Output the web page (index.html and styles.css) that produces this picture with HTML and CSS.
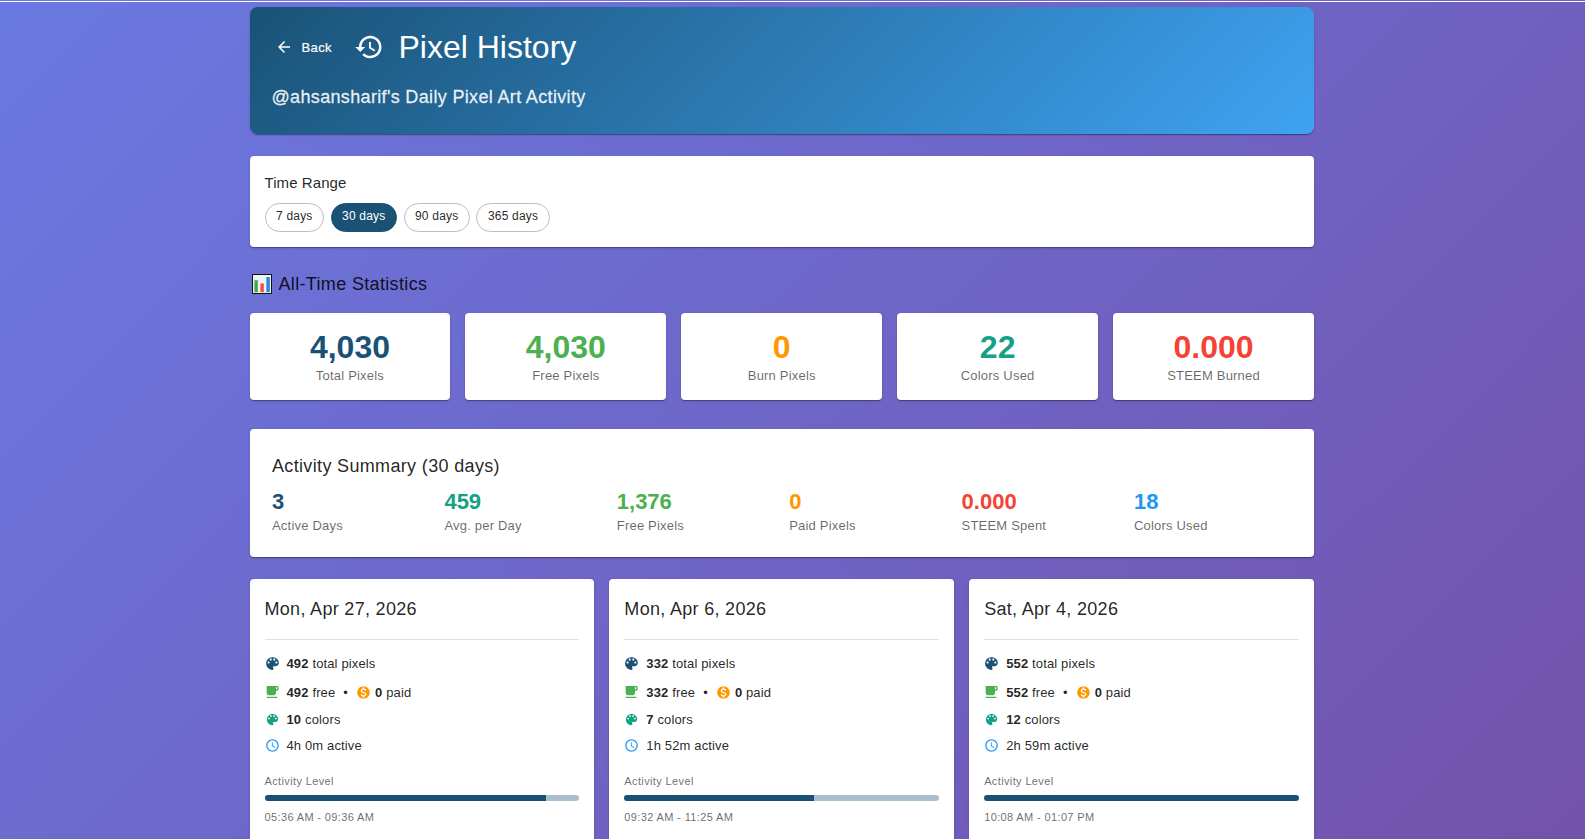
FILE: index.html
```html
<!DOCTYPE html>
<html lang="en">
<head>
<meta charset="utf-8">
<title>Pixel History</title>
<link rel="stylesheet" href="styles.css">
</head>
<body>
<div class="topline"></div>
<main class="container">
  <header class="hero">
    <div class="hero-top">
      <a class="back"><svg class="back-icon" viewBox="0 0 24 24"><path d="M20 11H7.83l5.59-5.59L12 4l-8 8 8 8 1.41-1.41L7.83 13H20v-2z"/></svg>Back</a>
      <svg class="hero-icon" viewBox="0 0 24 24"><path d="M13 3c-4.97 0-9 4.03-9 9H1l3.89 3.89.07.14L9 12H6c0-3.87 3.13-7 7-7s7 3.13 7 7-3.13 7-7 7c-1.93 0-3.68-.79-4.94-2.06l-1.42 1.42C8.27 19.99 10.51 21 13 21c4.97 0 9-4.03 9-9s-4.03-9-9-9zm-1 5v5l4.28 2.54.72-1.21-3.5-2.08V8H12z"/></svg>
      <h1>Pixel History</h1>
    </div>
    <p class="subtitle">@ahsansharif's Daily Pixel Art Activity</p>
  </header>

  <section class="card range">
    <div class="range-label">Time Range</div>
    <div class="chips">
      <span class="chip">7 days</span>
      <span class="chip active">30 days</span>
      <span class="chip">90 days</span>
      <span class="chip">365 days</span>
    </div>
  </section>

  <h2 class="section-title"><svg class="chart-emoji" viewBox="0 0 20 20"><rect x="0.5" y="0.5" width="19" height="19" fill="#edf2f7" stroke="#111"/><rect x="2.4" y="6.2" width="3.4" height="12" fill="#3fa648"/><rect x="8.4" y="9.4" width="3.4" height="8.8" fill="#e8553c"/><rect x="14.4" y="3" width="3.4" height="15.2" fill="#2f86d6"/></svg>All-Time Statistics</h2>

  <section class="stats">
    <div class="card stat"><div class="stat-value c-navy">4,030</div><div class="stat-label">Total Pixels</div></div>
    <div class="card stat"><div class="stat-value c-green">4,030</div><div class="stat-label">Free Pixels</div></div>
    <div class="card stat"><div class="stat-value c-orange">0</div><div class="stat-label">Burn Pixels</div></div>
    <div class="card stat"><div class="stat-value c-teal">22</div><div class="stat-label">Colors Used</div></div>
    <div class="card stat"><div class="stat-value c-red">0.000</div><div class="stat-label">STEEM Burned</div></div>
  </section>

  <section class="card summary">
    <h3>Activity Summary (30 days)</h3>
    <div class="summary-grid">
      <div><div class="sum-value c-navy">3</div><div class="sum-label">Active Days</div></div>
      <div><div class="sum-value c-teal">459</div><div class="sum-label">Avg. per Day</div></div>
      <div><div class="sum-value c-green">1,376</div><div class="sum-label">Free Pixels</div></div>
      <div><div class="sum-value c-orange">0</div><div class="sum-label">Paid Pixels</div></div>
      <div><div class="sum-value c-red">0.000</div><div class="sum-label">STEEM Spent</div></div>
      <div><div class="sum-value c-blue">18</div><div class="sum-label">Colors Used</div></div>
    </div>
  </section>

  <svg class="sprite" width="0" height="0">
    <symbol id="i-palette" viewBox="0 0 24 24"><path d="M12 3c-4.97 0-9 4.03-9 9s4.03 9 9 9c.83 0 1.5-.67 1.5-1.5 0-.39-.15-.74-.39-1.01-.23-.26-.38-.61-.38-.99 0-.83.67-1.5 1.5-1.5H16c2.76 0 5-2.24 5-5 0-4.42-4.03-8-9-8zm-5.5 9c-.83 0-1.5-.67-1.5-1.5S5.67 9 6.5 9 8 9.67 8 10.5 7.33 12 6.5 12zm3-4C8.67 8 8 7.33 8 6.5S8.67 5 9.5 5s1.5.67 1.5 1.5S10.33 8 9.5 8zm5 0c-.83 0-1.5-.67-1.5-1.5S13.67 5 14.5 5s1.5.67 1.5 1.5S15.33 8 14.5 8zm3 4c-.83 0-1.5-.67-1.5-1.5S16.67 9 17.5 9s1.5.67 1.5 1.5-.67 1.5-1.5 1.5z"/></symbol>
    <symbol id="i-cup" viewBox="0 0 24 24"><path d="M20 3H4v10c0 2.21 1.79 4 4 4h6c2.21 0 4-1.79 4-4v-3h2c1.11 0 2-.9 2-2V5c0-1.11-.89-2-2-2zm0 5h-2V5h2v3zM4 19h16v2H4z"/></symbol>
    <symbol id="i-coin" viewBox="0 0 24 24"><path d="M12 2C6.48 2 2 6.48 2 12s4.48 10 10 10 10-4.48 10-10S17.52 2 12 2zm1.41 16.09V20h-2.67v-1.93c-1.71-.36-3.16-1.46-3.27-3.4h1.96c.1 1.05.82 1.87 2.65 1.87 1.96 0 2.4-.98 2.4-1.59 0-.83-.44-1.61-2.67-2.14-2.48-.6-4.18-1.62-4.18-3.67 0-1.72 1.39-2.84 3.11-3.21V4h2.67v1.95c1.86.45 2.79 1.86 2.85 3.39H14.3c-.05-1.11-.64-1.87-2.22-1.87-1.5 0-2.4.68-2.4 1.64 0 .84.65 1.39 2.67 1.91s4.18 1.39 4.18 3.91c-.01 1.83-1.38 2.83-3.12 3.16z"/></symbol>
    <symbol id="i-clock" viewBox="0 0 24 24"><path d="M11.99 2C6.47 2 2 6.48 2 12s4.47 10 9.99 10C17.52 22 22 17.52 22 12S17.52 2 11.99 2zM12 20c-4.42 0-8-3.58-8-8s3.58-8 8-8 8 3.58 8 8-3.58 8-8 8zm.5-13H11v6l5.25 3.15.75-1.23-4.5-2.67z"/></symbol>
  </svg>

  <section class="days">
    <article class="card day">
      <h4>Mon, Apr 27, 2026</h4>
      <hr class="divider">
      <div class="row row-total"><svg class="ico c-navy"><use href="#i-palette"/></svg><span><b>492</b> total pixels</span></div>
      <div class="row row-free"><svg class="ico c-green"><use href="#i-cup"/></svg><span><b>492</b> free</span><span class="dot">•</span><svg class="ico-sm c-orange"><use href="#i-coin"/></svg><span><b>0</b> paid</span></div>
      <div class="row row-colors"><svg class="ico c-teal"><use href="#i-palette"/></svg><span><b>10</b> colors</span></div>
      <div class="row row-time"><svg class="ico c-blue"><use href="#i-clock"/></svg><span>4h 0m active</span></div>
      <div class="level-label">Activity Level</div>
      <div class="track"><div class="fill" style="width:89.3%"></div></div>
      <div class="time-range">05:36 AM - 09:36 AM</div>
    </article>
    <article class="card day">
      <h4>Mon, Apr 6, 2026</h4>
      <hr class="divider">
      <div class="row row-total"><svg class="ico c-navy"><use href="#i-palette"/></svg><span><b>332</b> total pixels</span></div>
      <div class="row row-free"><svg class="ico c-green"><use href="#i-cup"/></svg><span><b>332</b> free</span><span class="dot">•</span><svg class="ico-sm c-orange"><use href="#i-coin"/></svg><span><b>0</b> paid</span></div>
      <div class="row row-colors"><svg class="ico c-teal"><use href="#i-palette"/></svg><span><b>7</b> colors</span></div>
      <div class="row row-time"><svg class="ico c-blue"><use href="#i-clock"/></svg><span>1h 52m active</span></div>
      <div class="level-label">Activity Level</div>
      <div class="track"><div class="fill" style="width:60.3%"></div></div>
      <div class="time-range">09:32 AM - 11:25 AM</div>
    </article>
    <article class="card day">
      <h4>Sat, Apr 4, 2026</h4>
      <hr class="divider">
      <div class="row row-total"><svg class="ico c-navy"><use href="#i-palette"/></svg><span><b>552</b> total pixels</span></div>
      <div class="row row-free"><svg class="ico c-green"><use href="#i-cup"/></svg><span><b>552</b> free</span><span class="dot">•</span><svg class="ico-sm c-orange"><use href="#i-coin"/></svg><span><b>0</b> paid</span></div>
      <div class="row row-colors"><svg class="ico c-teal"><use href="#i-palette"/></svg><span><b>12</b> colors</span></div>
      <div class="row row-time"><svg class="ico c-blue"><use href="#i-clock"/></svg><span>2h 59m active</span></div>
      <div class="level-label">Activity Level</div>
      <div class="track"><div class="fill" style="width:100%"></div></div>
      <div class="time-range">10:08 AM - 01:07 PM</div>
    </article>
  </section>
</main>
</body>
</html>
```

FILE: styles.css
```css
* { box-sizing: border-box; }
html, body { margin: 0; height: 839px; overflow: hidden; }
body {
  background: linear-gradient(135deg, #6a79e2 0%, #7352ab 100%);
  font-family: "Liberation Sans", Arial, sans-serif;
  color: rgba(0,0,0,.87);
}
.topline { height: 2px; border-bottom: 1px solid #fff; }
.container { width: 1064.5px; margin: 5px 0 0 249.5px; }
h1,h2,h3,h4,p { margin: 0; font-weight: 400; }
.card {
  background: #fff;
  border-radius: 4px;
  box-shadow: 0 2px 1px -1px rgba(0,0,0,.2), 0 1px 1px 0 rgba(0,0,0,.14), 0 1px 3px 0 rgba(0,0,0,.12);
}
.hero {
  height: 127px;
  border-radius: 8px;
  padding: 16px 22px;
  background: linear-gradient(135deg, #1a5276 0%, #3fa3f2 100%);
  box-shadow: 0 2px 1px -1px rgba(0,0,0,.2), 0 1px 1px 0 rgba(0,0,0,.14), 0 1px 3px 0 rgba(0,0,0,.12);
  color: #fff;
}
.hero-top { display: flex; align-items: center; height: 48px; }
.back { display: flex; align-items: center; font-size: 13px; letter-spacing: .37px; width: 82px; padding-left: 3px; -webkit-text-stroke: .2px #fff; }
.back-icon { width: 18px; height: 18px; fill: #fff; margin-right: 9px; }
.hero-icon { width: 30px; height: 30px; fill: #fff; margin-right: 15px; }
h1 { font-size: 32px; line-height: 1.2; }
.subtitle { margin-top: 13px; font-size: 18px; color: rgba(255,255,255,.9); line-height: 1.5; letter-spacing: .34px; -webkit-text-stroke: .3px rgba(255,255,255,.8); }

.range { margin-top: 22px; height: 91px; padding: 16px 15px; }
.range-label { font-size: 15px; line-height: 22px; letter-spacing: .08px; }
.chips { display: flex; gap: 6.5px; margin-top: 9px; }
.chip {
  height: 29px; padding: 0 10.5px 3px; display: flex; align-items: center;
  border: 1px solid #bdbdbd; border-radius: 15px;
  font-size: 12px; letter-spacing: .2px;
}
.chip.active { background: #1a5276; border-color: #1a5276; color: #fff; }

.section-title { display: flex; align-items: center; font-size: 18px; margin-top: 23px; line-height: 28px; letter-spacing: .34px; }
.chart-emoji { width: 20px; height: 20px; margin: 0 7px 0 2px; }

.stats { display: grid; grid-template-columns: repeat(5, 1fr); gap: 15px; margin-top: 15px; }
.stat { height: 87px; text-align: center; padding-top: 16px; }
.stat-value { font-size: 32px; font-weight: 700; line-height: 36px; }
.stat-label { font-size: 13px; line-height: 20px; margin-top: 1px; letter-spacing: .2px; color: rgba(0,0,0,.6); }

.summary { margin-top: 29px; height: 128px; padding: 24px 22.5px; }
.summary h3 { font-size: 18px; line-height: 26px; letter-spacing: .34px; }
.summary-grid { display: grid; grid-template-columns: repeat(6, 172.4px); margin-top: 9px; }
.sum-value { font-size: 22px; font-weight: 700; line-height: 28px; }
.sum-label { font-size: 13px; line-height: 20px; letter-spacing: .2px; color: rgba(0,0,0,.6); }

.days { display: grid; grid-template-columns: repeat(3, 1fr); gap: 15px; margin-top: 22px; }
.sprite { position: absolute; }
.day { height: 300px; padding: 17px 15px 0; }
.day h4 { font-size: 18px; line-height: 26px; letter-spacing: .31px; }
.divider { border: 0; border-top: 1px solid #e0e0e0; margin: 17px 0 0; }
.row { display: flex; align-items: center; font-size: 13px; height: 20px; letter-spacing: .14px; }
.row b { font-weight: 700; }
.row-total { margin-top: 13px; }
.row-free { margin-top: 9px; }
.row-colors { margin-top: 7px; }
.row-time { margin-top: 6px; }
.ico { fill: currentColor; flex: none; }
.row-total .ico { width: 17px; height: 17px; margin: 0 6px 0 -1px; }
.row-free .ico { width: 16px; height: 16px; margin: 0 7px 0 -1px; }
.row-colors .ico, .row-time .ico { width: 15px; height: 15px; margin-right: 7px; }
.ico-sm { width: 15px; height: 15px; fill: currentColor; margin-right: 4px; flex: none; }
.row span { color: rgba(0,0,0,.87); }
.row .dot { margin: 0 8px; }
.level-label { font-size: 11px; letter-spacing: .37px; line-height: 16px; margin-top: 18px; color: rgba(0,0,0,.6); }
.track { height: 6px; border-radius: 3px; background: #a9bfce; margin-top: 6px; overflow: hidden; }
.fill { height: 100%; background: #1a5276; }
.time-range { font-size: 11px; letter-spacing: .37px; line-height: 16px; margin-top: 8px; color: rgba(0,0,0,.6); }

.c-navy { color: #1a5276; }
.c-green { color: #4caf50; }
.c-orange { color: #ff9800; }
.c-teal { color: #16a085; }
.c-red { color: #f44336; }
.c-blue { color: #2196f3; }
```
